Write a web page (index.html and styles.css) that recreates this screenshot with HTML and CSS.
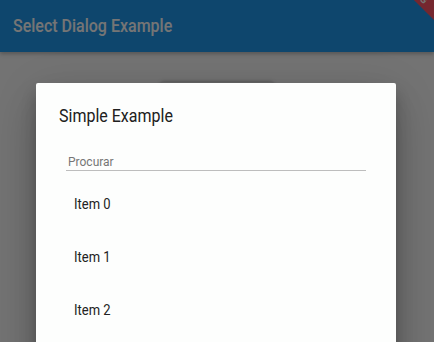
FILE: index.html
```html
<!DOCTYPE html>
<html>
<head>
<meta charset="utf-8">
<link rel="stylesheet" href="styles.css">
</head>
<body>
<div class="app">
  <header class="appbar">
    <h1 class="appbar-title">Select Dialog Example</h1>
    <div class="debug-banner"><span>DEBUG</span></div>
  </header>
  <main class="content">
    <div class="raised-button"></div>
  </main>
  <div class="scrim"></div>
  <div class="dialog">
    <h2 class="dialog-title">Simple Example</h2>
    <div class="search-field"><span class="placeholder">Procurar</span></div>
    <ul class="item-list">
      <li class="item"><span class="item-label">Item 0</span></li>
      <li class="item"><span class="item-label">Item 1</span></li>
      <li class="item"><span class="item-label">Item 2</span></li>
    </ul>
  </div>
</div>
</body>
</html>
```
FILE: styles.css
```css
* { box-sizing: border-box; }
html, body {
  margin: 0;
  padding: 0;
  width: 434px;
  height: 342px;
  overflow: hidden;
  font-family: Roboto, "Noto Sans", "Liberation Sans", sans-serif;
}
.app {
  position: relative;
  width: 434px;
  height: 342px;
  background: #fafafa;
  overflow: hidden;
  display: flex;
  flex-direction: column;
}
.appbar {
  position: relative;
  height: 52px;
  flex: 0 0 52px;
  background: #1f9aee;
  display: flex;
  align-items: center;
  padding-left: 13px;
  overflow: hidden;
  box-shadow: 0 2px 4px rgba(0,0,0,0.25);
  z-index: 1;
}
.appbar-title {
  margin: 0;
  font-size: 16px;
  font-weight: 500;
  color: #ffffff;
  line-height: 24px;
  transform: scaleY(1.1);
  transform-origin: left center;
}
.debug-banner {
  position: absolute;
  left: 364px;
  top: -18px;
  width: 100px;
  height: 15px;
  background: #ff5566;
  transform: rotate(45deg);
  display: flex;
  align-items: center;
  justify-content: center;
}
.debug-banner span {
  color: #fff;
  font-size: 10px;
  font-weight: 700;
  letter-spacing: 1px;
  line-height: 1;
}
.content {
  flex: 1;
  display: flex;
  justify-content: center;
  padding-top: 30px;
}
.raised-button {
  width: 112px;
  height: 36px;
  border-radius: 2px;
  background: #e0e0e0;
  box-shadow: 0 0 4px rgba(0,0,0,0.35);
}
.scrim {
  position: absolute;
  inset: 0;
  background: rgba(0,0,0,0.54);
  z-index: 2;
}
.dialog {
  position: absolute;
  left: 36px;
  top: 83px;
  width: 360px;
  height: 300px;
  background: #fdfefd;
  border-radius: 2px;
  z-index: 3;
  padding: 21px 0 0 0;
  box-shadow: 0 11px 15px rgba(0,0,0,0.2), 0 24px 38px rgba(0,0,0,0.14), 0 9px 46px rgba(0,0,0,0.12);
}
.dialog-title {
  margin: 0 0 0 23px;
  font-size: 16px;
  font-weight: 400;
  line-height: 24px;
  color: #202020;
  transform: scaleY(1.1);
  transform-origin: left center;
}
.search-field {
  margin: 23px 30px 0 30px;
  height: 20px;
  line-height: 19px;
  border-bottom: 1px solid #bdbdbd;
  padding-left: 2px;
}
.placeholder {
  display: inline-block;
  font-size: 12px;
  color: #767676;
  transform: scaleY(1.1);
  transform-origin: left center;
}
.item-list {
  list-style: none;
  margin: 7px 0 0 0;
  padding: 0;
}
.item {
  height: 53px;
  display: flex;
  align-items: center;
  padding-left: 38px;
  font-size: 13px;
  color: #222222;
}
.item-label {
  display: inline-block;
  transform: scaleY(1.1);
  transform-origin: left center;
}
```
